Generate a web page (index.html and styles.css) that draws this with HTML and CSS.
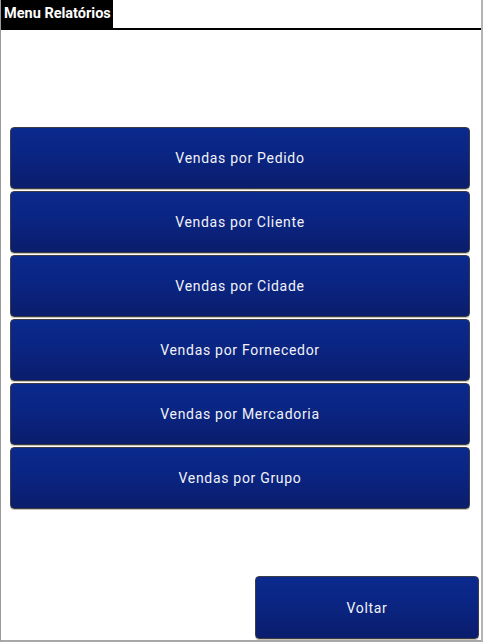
FILE: index.html
```html
<!DOCTYPE html>
<html lang="pt">
<head>
<meta charset="utf-8">
<title>Menu Relatórios</title>
<link rel="stylesheet" href="styles.css">
</head>
<body>
<div class="screen">
  <header class="topbar">
    <div class="tab">Menu Relatórios</div>
  </header>
  <main class="content">
    <nav class="menu">
      <button class="btn">Vendas por Pedido</button>
      <button class="btn">Vendas por Cliente</button>
      <button class="btn">Vendas por Cidade</button>
      <button class="btn">Vendas por Fornecedor</button>
      <button class="btn">Vendas por Mercadoria</button>
      <button class="btn">Vendas por Grupo</button>
    </nav>
    <div class="footer">
      <button class="btn btn-back">Voltar</button>
    </div>
  </main>
</div>
</body>
</html>
```

FILE: styles.css
```css
html, body {
  margin: 0;
  padding: 0;
  background: #ffffff;
}

.screen {
  width: 483px;
  height: 642px;
  box-sizing: border-box;
  border-left: 1px solid #9a9a9a;
  border-right: 2px solid #b4b4b4;
  border-bottom: 2px solid #a8a8a8;
  display: flex;
  flex-direction: column;
  font-family: Roboto, "Liberation Sans", sans-serif;
  overflow: hidden;
}

.topbar {
  height: 28px;
  border-bottom: 2px solid #000000;
  display: flex;
  align-items: stretch;
}

.tab {
  background: #000000;
  color: #ffffff;
  font-weight: bold;
  font-size: 14.5px;
  line-height: 28px;
  padding: 0 2px 0 3px;
  white-space: nowrap;
}

.content {
  flex: 1;
  display: flex;
  flex-direction: column;
  justify-content: space-between;
  padding: 97px 10px 1px 9px;
}

.menu {
  display: flex;
  flex-direction: column;
  gap: 2px;
}

.btn {
  display: block;
  box-sizing: border-box;
  height: 62px;
  border: 1px solid #3c3c46;
  border-radius: 4px;
  background: linear-gradient(to bottom, #0b2a8e 0%, #0a2480 50%, #0a1d6c 100%);
  color: #f2f2f8;
  font-family: Roboto, "Liberation Sans", sans-serif;
  font-size: 14px;
  letter-spacing: 0.7px;
  text-align: center;
  box-shadow: 0 1px 0 #c9c4b4;
  padding: 0;
}

.menu .btn {
  width: 460px;
}

.footer {
  display: flex;
  justify-content: flex-end;
}

.btn-back {
  width: 224px;
  height: 63px;
  margin-right: -8px;
}
```
